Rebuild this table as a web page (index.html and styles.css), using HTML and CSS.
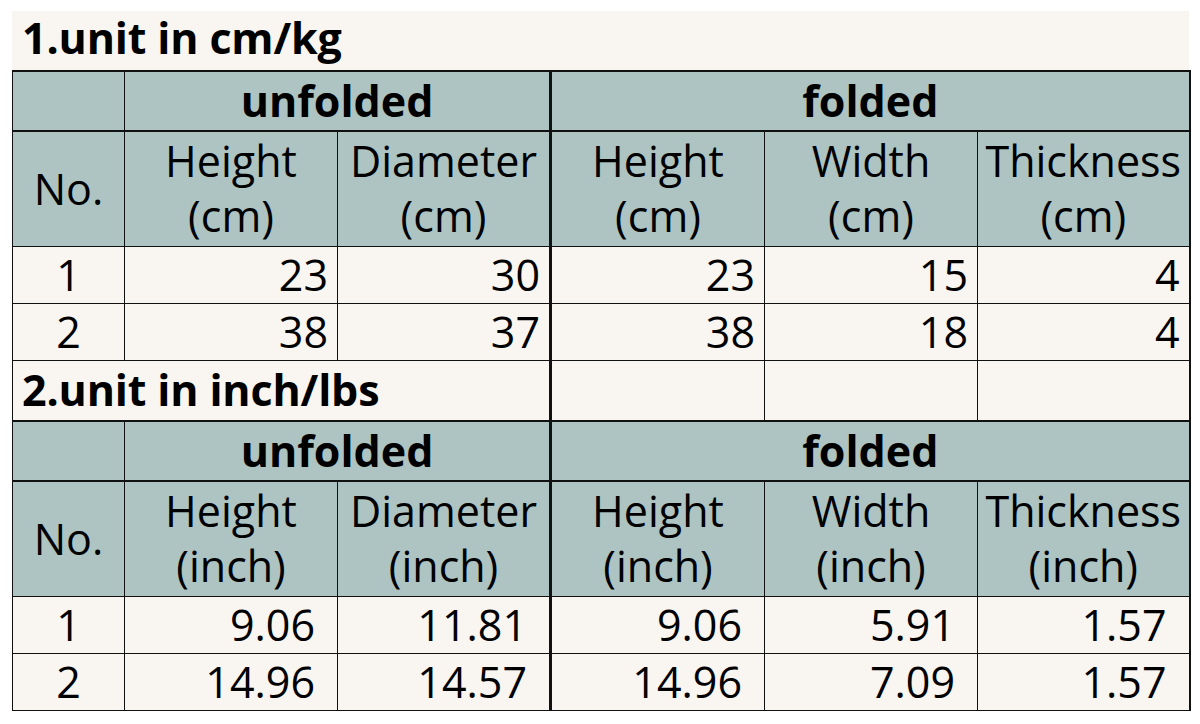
FILE: index.html
```html
<!DOCTYPE html>
<html>
<head>
<meta charset="utf-8">
<link rel="stylesheet" href="styles.css">
</head>
<body>
<div class="sheet">
  <div class="title">1.unit in cm/kg</div>
  <table class="grid">
    <colgroup>
      <col class="c-no"><col class="c-a"><col class="c-b"><col class="c-c"><col class="c-d"><col class="c-e">
    </colgroup>
    <tr class="h1">
      <td class="hd"></td>
      <td class="hd grp" colspan="2">unfolded</td>
      <td class="hd grp mid" colspan="3">folded</td>
    </tr>
    <tr class="h2">
      <td class="hd hno">No.</td>
      <td class="hd">Height<br>(cm)</td>
      <td class="hd">Diameter<br>(cm)</td>
      <td class="hd mid">Height<br>(cm)</td>
      <td class="hd">Width<br>(cm)</td>
      <td class="hd">Thickness<br>(cm)</td>
    </tr>
    <tr class="dr">
      <td class="no">1</td><td class="num">23</td><td class="num">30</td><td class="num mid">23</td><td class="num">15</td><td class="num">4</td>
    </tr>
    <tr class="dr">
      <td class="no">2</td><td class="num">38</td><td class="num">37</td><td class="num mid">38</td><td class="num">18</td><td class="num">4</td>
    </tr>
    <tr class="tr2">
      <td class="title2" colspan="3">2.unit in inch/lbs</td>
      <td class="mid"></td><td></td><td></td>
    </tr>
    <tr class="h1">
      <td class="hd"></td>
      <td class="hd grp" colspan="2">unfolded</td>
      <td class="hd grp mid" colspan="3">folded</td>
    </tr>
    <tr class="h2">
      <td class="hd hno">No.</td>
      <td class="hd">Height<br>(inch)</td>
      <td class="hd">Diameter<br>(inch)</td>
      <td class="hd mid">Height<br>(inch)</td>
      <td class="hd">Width<br>(inch)</td>
      <td class="hd">Thickness<br>(inch)</td>
    </tr>
    <tr class="dr">
      <td class="no">1</td><td class="num pad2">9.06</td><td class="num pad2">11.81</td><td class="num mid pad2">9.06</td><td class="num pad2">5.91</td><td class="num pad2">1.57</td>
    </tr>
    <tr class="dr">
      <td class="no">2</td><td class="num pad2">14.96</td><td class="num pad2">14.57</td><td class="num mid pad2">14.96</td><td class="num pad2">7.09</td><td class="num pad2">1.57</td>
    </tr>
  </table>
</div>
</body>
</html>
```

FILE: styles.css
```css
html, body {
  margin: 0;
  padding: 0;
  background: #ffffff;
}

body {
  font-family: "Open Sans", "Noto Sans", sans-serif;
  color: #000;
}

.sheet {
  margin: 11px 0 0 12px;
  width: 1177px;
  background: #f9f5f0;
}

.title {
  height: 59px;
  box-sizing: border-box;
  padding: 0 0 0 10px;
  font-size: 43px;
  font-weight: 700;
  letter-spacing: -0.15px;
  line-height: 54px;
}

.grid {
  width: 1177px;
  border-collapse: collapse;
  table-layout: fixed;
  font-size: 43px;
}

.c-no { width: 112px; }
.c-a { width: 213px; }
.c-b { width: 213px; }
.c-c { width: 214px; }
.c-d { width: 213px; }
.c-e { width: 212px; }

.grid td {
  border: 1px solid #111;
  padding: 0;
  white-space: nowrap;
}

.grid tr > td:first-child { border-left: 1px solid #111; }
.grid tr > td:last-child { border-right: 2px solid #111; }

.grid tr.h1 td,
.grid tr.h2 td {
  border-top: 2px solid #111;
}

.grid .mid { border-left: 3px solid #111; }

.hd {
  background: #adc4c2;
  text-align: center;
}

.h1 { height: 60px; }
.h1 td {
  font-weight: 700;
  line-height: 54px;
}

.h2 { height: 115px; }
.h2 td {
  line-height: 55px;
  vertical-align: top;
  padding-top: 1px;
}

.h2 td.hno {
  vertical-align: middle;
  padding-top: 0;
  line-height: 54px;
}

.dr { height: 57px; }
.dr td { line-height: 54px; }

.no { text-align: center; }

.num {
  text-align: right;
  padding-right: 9px !important;
}

.num.pad2 { padding-right: 22px !important; }

.tr2 { height: 61px; }

.title2 {
  font-weight: 700;
  letter-spacing: -0.15px;
  padding-left: 9px !important;
  line-height: 54px;
}
```
